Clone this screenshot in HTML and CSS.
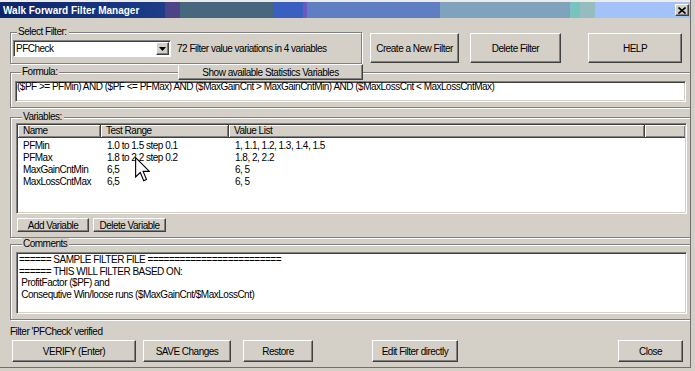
FILE: index.html
```html
<!DOCTYPE html>
<html lang="en">
<head>
    <meta charset="UTF-8">
    <meta name="viewport" content="width=device-width, initial-scale=1.0">
    <title>Walk Forward Filter Manager</title>
    <link rel="stylesheet" href="styles.css">
</head>
<body>

    <div class="window">
        <div class="strip"></div>
        <div class="titlebar">
            <span class="title">Walk Forward Filter Manager</span>
            <span class="close-btn">
                <svg width="8" height="7" viewBox="0 0 8 7"><path d="M0.5 0.5 L7.5 6.5 M7.5 0.5 L0.5 6.5" stroke="#000" stroke-width="1.6"/></svg>
            </span>
        </div>

        <div class="dialog">
            <div class="top-row">
                <div class="group select-group">
                    <div class="group-title">Select Filter:</div>
                    <div class="select-row">
                        <div class="combo">
                            <span class="combo-text">PFCheck</span>
                            <span class="combo-btn">
                                <svg width="7" height="4" viewBox="0 0 7 4"><path d="M0 0 L7 0 L3.5 4 Z" fill="#000"/></svg>
                            </span>
                        </div>
                        <span class="info">72 Filter value variations in 4 variables</span>
                    </div>
                </div>
                <button class="btn btn-create">Create a New Filter</button>
                <button class="btn btn-delete">Delete Filter</button>
                <button class="btn btn-help">HELP</button>
            </div>

            <button class="btn btn-stats">Show available Statistics Variables</button>

            <div class="group formula-group">
                <div class="group-title">Formula:</div>
                <div class="field formula-box">($PF &gt;= PFMin) AND ($PF &lt;= PFMax) AND ($MaxGainCnt &gt; MaxGainCntMin) AND ($MaxLossCnt &lt; MaxLossCntMax)</div>
            </div>

            <div class="group variables-group">
                <div class="group-title">Variables:</div>
                <div class="field list">
                    <div class="list-header">
                        <div class="col">Name</div>
                        <div class="col">Test Range</div>
                        <div class="col">Value List</div>
                        <div class="col"></div>
                    </div>
                    <div class="list-rows">
                        <div class="list-row"><span>PFMin</span><span>1.0 to 1.5 step 0.1</span><span>1, 1.1, 1.2, 1.3, 1.4, 1.5</span></div>
                        <div class="list-row"><span>PFMax</span><span>1.8 to 2.2 step 0.2</span><span>1.8, 2, 2.2</span></div>
                        <div class="list-row"><span>MaxGainCntMin</span><span>6,5</span><span>6, 5</span></div>
                        <div class="list-row"><span>MaxLossCntMax</span><span>6,5</span><span>6, 5</span></div>
                    </div>
                </div>
                <div class="var-buttons">
                    <button class="btn btn-add">Add Variable</button>
                    <button class="btn btn-delvar">Delete Variable</button>
                </div>
            </div>

            <div class="group comments-group">
                <div class="group-title">Comments</div>
                <div class="field comments-box">====== SAMPLE FILTER FILE =========================
====== THIS WILL FILTER BASED ON:
 ProfitFactor ($PF) and
 Consequtive Win/loose runs ($MaxGainCnt/$MaxLossCnt)</div>
            </div>

            <div class="status">Filter 'PFCheck' verified</div>

            <div class="bottom-row">
                <button class="btn btn-verify">VERIFY (Enter)</button>
                <button class="btn btn-save">SAVE Changes</button>
                <button class="btn btn-restore">Restore</button>
                <button class="btn btn-edit">Edit Filter directly</button>
                <button class="btn btn-close">Close</button>
            </div>
        </div>

        <!-- mouse pointer caught in the screenshot -->
        <svg class="cursor" width="15" height="25" viewBox="0 0 12 20">
            <path d="M0.5 0.5 L0.5 16 L4.2 12.4 L7 19 L9.2 18 L6.5 11.5 L11.5 11.5 Z" fill="#fff" stroke="#000" stroke-width="0.9"/>
        </svg>
    </div>

</body>
</html>
```

FILE: styles.css
```css
body {
    margin: 0;
    background-color: #d4d0c8;
    font-family: "Liberation Sans", Arial, sans-serif;
    font-size: 10px;
    letter-spacing: -0.5px;
    color: #000;
}
.window {
    position: relative;
    width: 690px;
    height: 367px;
    border-right: 1px solid #6e6e6e;
    border-bottom: 1px solid #6e6e6e;
    background-color: #d4d0c8;
    overflow: hidden;
}
.strip {
    height: 2px;
    background-color: #ecebe8;
}
.titlebar {
    display: flex;
    align-items: center;
    justify-content: space-between;
    height: 16px;
    background: linear-gradient(to right,
        #0b256a 0, #1d3d88 165px,
        #4c4486 165px, #4c4486 180px,
        #47677e 180px, #47677e 273px,
        #3b5fc0 273px, #3b5fc0 303px,
        #6a5ac0 303px, #6a5ac0 307px,
        #5f7fc2 307px, #5f7fc2 440px,
        #7fa3bc 440px, #7fa3bc 570px,
        #78c2c0 570px, #78c2c0 580px,
        #95bcbe 580px, #95bcbe 595px,
        #a3c3f8 595px);
}
.title {
    padding-left: 3px;
    color: #fff;
    font-weight: bold;
    letter-spacing: 0;
}
.close-btn {
    display: flex;
    align-items: center;
    justify-content: center;
    width: 12px;
    height: 10px;
    margin-right: 1px;
    background-color: #d4d0c8;
    border: 1px solid;
    border-color: #fff #404040 #404040 #fff;
    box-shadow: inset -1px -1px #808080;
}
.dialog {
    padding-left: 10px;
}

/* group boxes */
.group {
    width: 671px;
    border: 1px solid #808080;
    box-shadow: inset 1px 1px #fff, 1px 1px #fff;
}
.group-title {
    width: max-content;
    margin: -7px 0 0 6px;
    padding: 0 2px 0 1px;
    line-height: 12px;
    background-color: #d4d0c8;
}

/* classic controls */
.btn {
    padding: 0;
    background-color: #d4d0c8;
    border: 1px solid;
    border-color: #fff #404040 #404040 #fff;
    box-shadow: inset -1px -1px #808080;
    font: inherit;
    letter-spacing: inherit;
    color: #000;
}
.field {
    background-color: #fff;
    border: 1px solid;
    border-color: #808080 #fff #fff #808080;
    box-shadow: inset 1px 1px #404040, inset -1px -1px #d4d0c8;
}

/* top row */
.top-row {
    display: flex;
    align-items: flex-start;
    margin-top: 14px;
}
.select-group {
    width: 352px;
    height: 32px;
    box-sizing: border-box;
}
.select-row {
    display: flex;
    align-items: center;
    margin-top: 2px;
}
.combo {
    display: flex;
    align-items: center;
    justify-content: space-between;
    width: 158px;
    height: 17px;
    box-sizing: border-box;
    margin-left: 2px;
    padding: 0 1px 0 1px;
    background-color: #fff;
    border: 1px solid;
    border-color: #808080 #fff #fff #808080;
    box-shadow: inset 1px 1px #404040;
}
.combo-text {
    padding-left: 1px;
}
.combo-btn {
    display: flex;
    align-items: center;
    justify-content: center;
    width: 11px;
    height: 11px;
    background-color: #d4d0c8;
    border: 1px solid;
    border-color: #fff #404040 #404040 #fff;
    box-shadow: inset -1px -1px #808080;
}
.info {
    margin-left: 6px;
}
.top-row .btn {
    height: 30px;
    margin-top: 1px;
}
.btn-create {
    width: 89px;
    margin-left: 8px;
}
.btn-delete {
    width: 91px;
    margin-left: 11px;
}
.btn-help {
    width: 94px;
    margin-left: 27px;
}
.btn-stats {
    display: block;
    position: relative;
    z-index: 1;
    width: 185px;
    height: 16px;
    margin-left: 168px;
}

/* formula */
.formula-group {
    margin-top: -8px;
    padding: 0 6px 5px 4px;
}
.formula-box {
    height: 19px;
    margin-top: 3px;
    padding-left: 1px;
    line-height: 9px;
    white-space: nowrap;
    overflow: hidden;
}

/* variables */
.variables-group {
    margin-top: 9px;
    padding: 0 4px 5px 5px;
}
.list {
    height: 87px;
    padding: 1px;
}
.list-header {
    display: grid;
    grid-template-columns: 83px 128px 416px 1fr;
    height: 13px;
}
.list-header .col {
    padding-left: 5px;
    line-height: 12px;
    background-color: #d4d0c8;
    border-right: 1px solid #404040;
    border-bottom: 1px solid #404040;
    box-shadow: inset 1px 1px #fff, inset -1px -1px #808080;
}
.list-header .col:last-child {
    border-right: none;
}
.list-rows {
    padding-top: 2px;
}
.list-row {
    display: grid;
    grid-template-columns: 83px 128px 416px;
    line-height: 12px;
}
.list-row span {
    padding-left: 5px;
}
.list-row span + span {
    padding-left: 6px;
}
.var-buttons {
    display: flex;
    margin-top: 4px;
}
.var-buttons .btn {
    height: 14px;
}
.btn-add {
    width: 72px;
    margin-left: 1px;
}
.btn-delvar {
    width: 73px;
    margin-left: 4px;
}

/* comments */
.comments-group {
    margin-top: 6px;
    padding: 0 6px 5px 5px;
}
.comments-box {
    height: 58px;
    margin-top: 2px;
    padding: 1px 1px 1px 2px;
    line-height: 11.5px;
    white-space: pre;
    overflow: hidden;
}

/* footer */
.status {
    margin-top: 6px;
    line-height: 12px;
}
.bottom-row {
    display: flex;
    margin-top: 2px;
}
.bottom-row .btn {
    height: 22px;
}
.btn-verify {
    width: 124px;
    margin-left: 2px;
}
.btn-save {
    width: 88px;
    margin-left: 7px;
}
.btn-restore {
    width: 70px;
    margin-left: 12px;
}
.btn-edit {
    width: 86px;
    margin-left: 59px;
}
.btn-close {
    width: 65px;
    margin-left: 160px;
}

.cursor {
    position: absolute;
    left: 135px;
    top: 157px;
}
```
